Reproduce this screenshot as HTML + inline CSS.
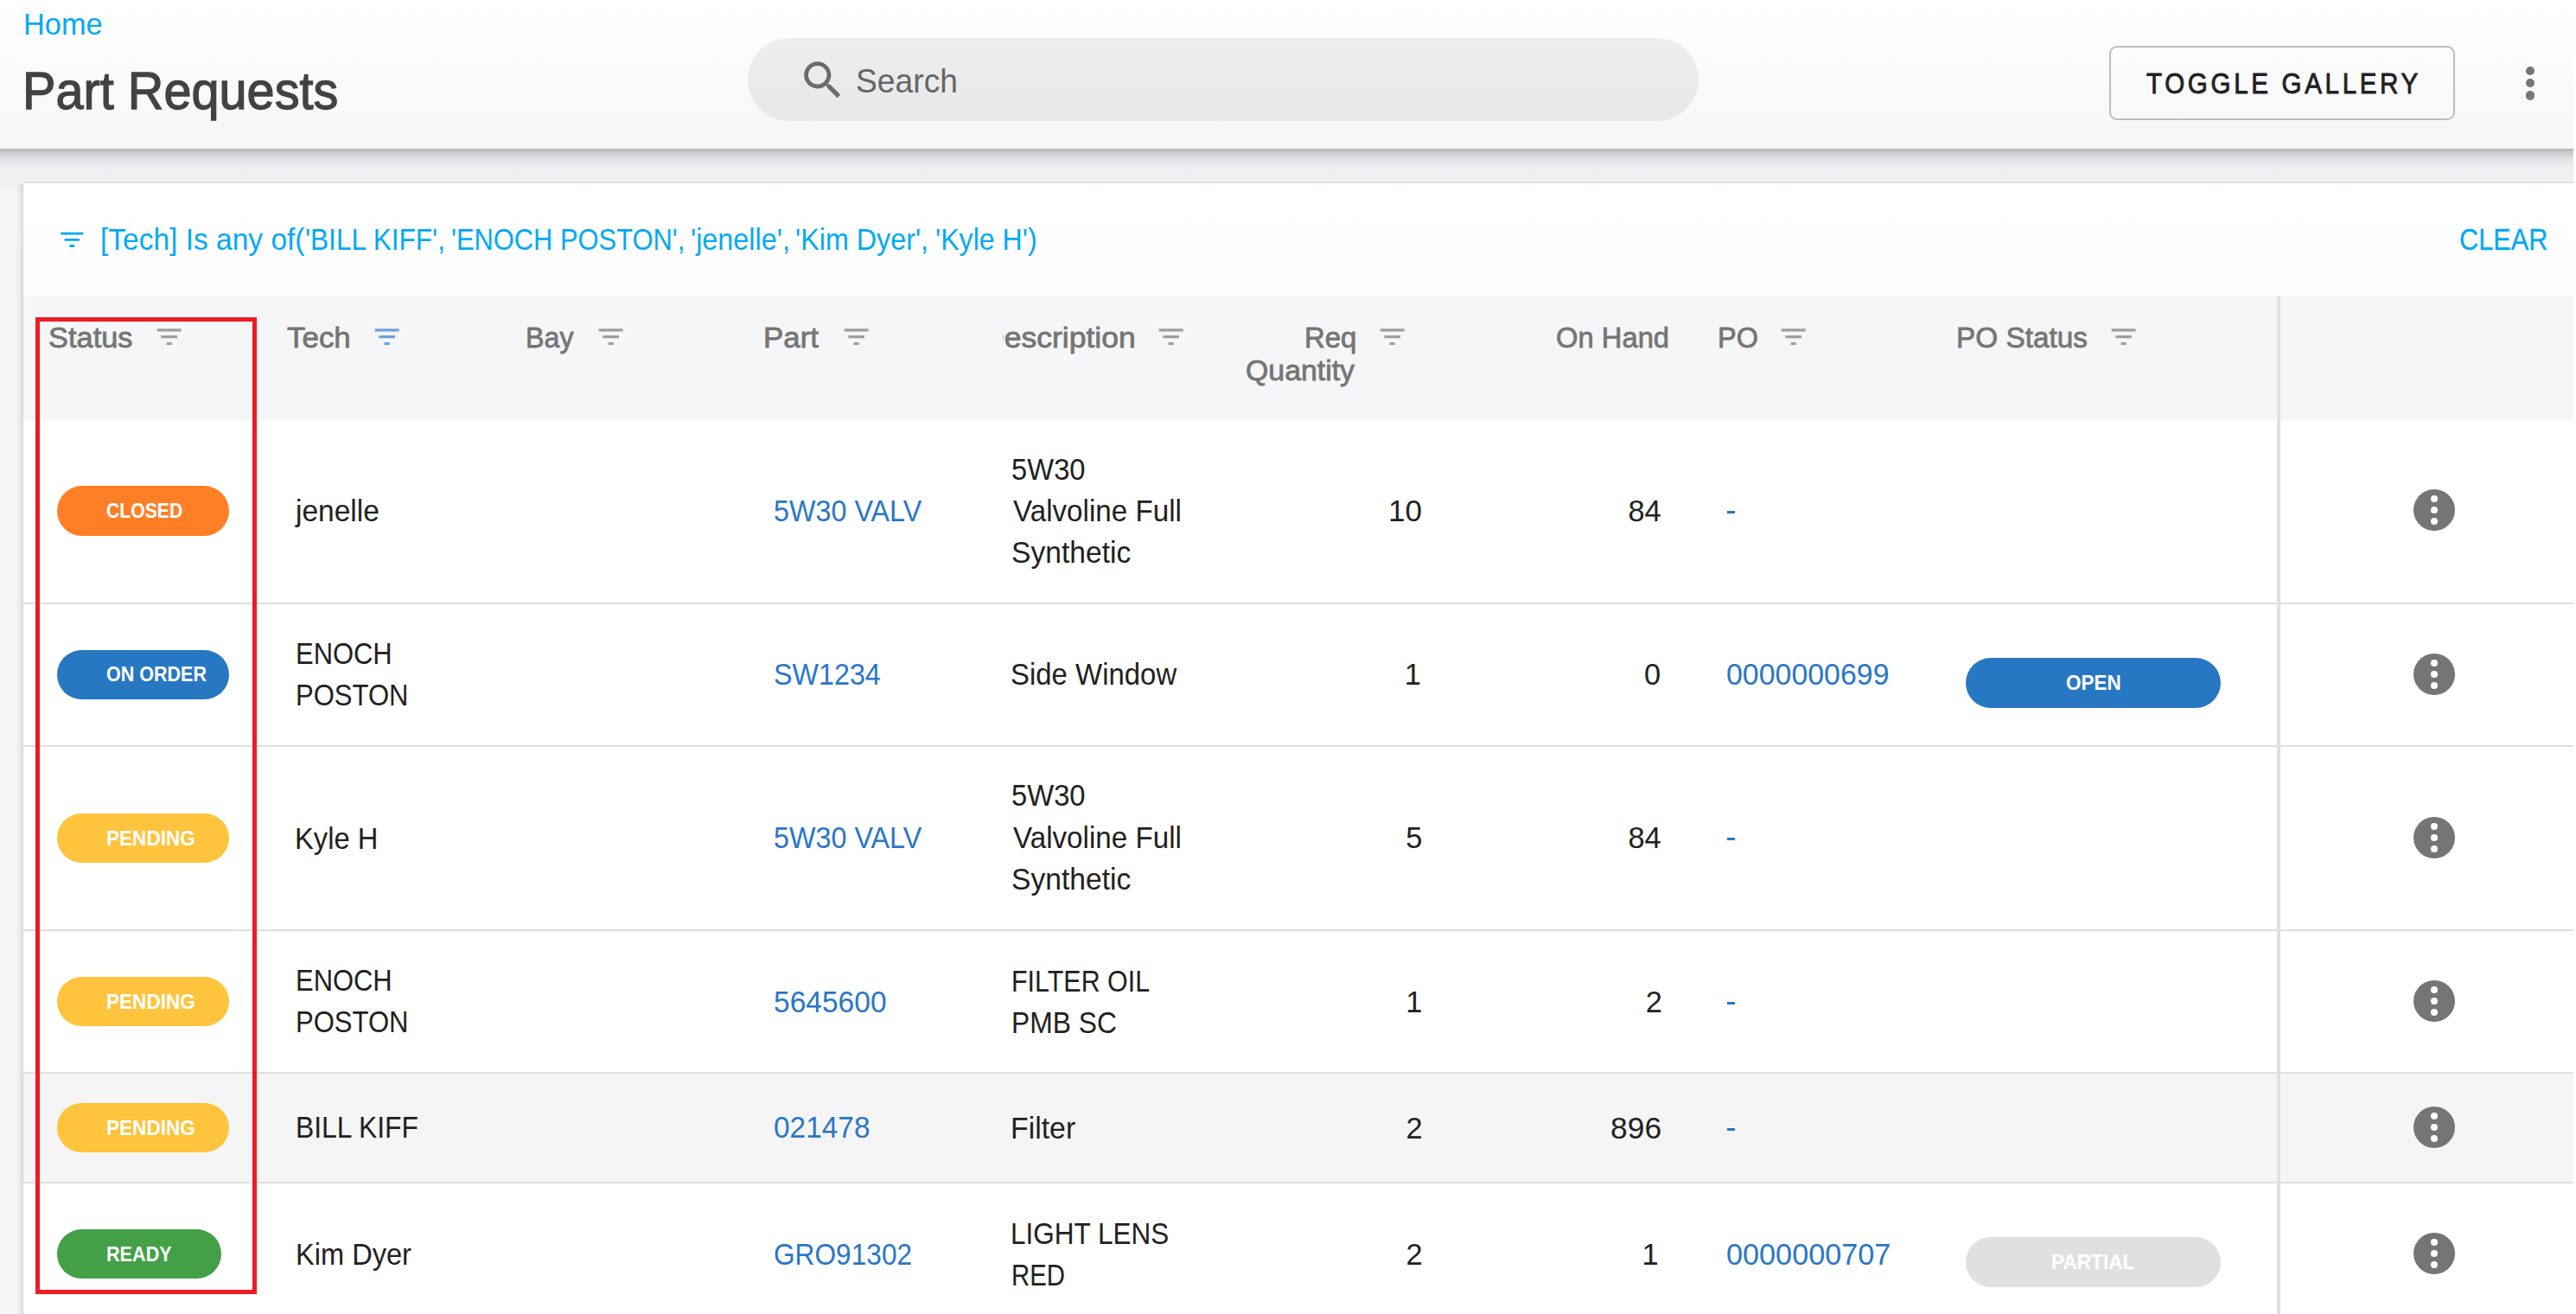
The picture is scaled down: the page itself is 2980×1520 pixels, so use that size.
<!DOCTYPE html>
<html><head><meta charset="utf-8"><title>Part Requests</title>
<style>
html,body{margin:0;padding:0;}
body{width:2980px;height:1520px;position:relative;overflow:hidden;background:#ffffff;font-family:"Liberation Sans",sans-serif;}
.page{position:absolute;left:0;top:0;width:2977px;height:1520px;background:#f5f6f8;overflow:hidden;}
.t{position:absolute;white-space:pre;transform-origin:0 0;}
.b{position:absolute;}
</style></head><body><div class="page">
<div class="b" style="left:0;top:0;width:2977px;height:172px;background:linear-gradient(#ffffff,#f5f6f8);"></div>
<div class="b" style="left:0;top:172px;width:2977px;height:50px;background:linear-gradient(#b3b4b7 0px,#c6c7ca 4px,#d9dadd 9px,#e6e7ea 15px,#eceef0 22px,#eff0f2 38px,#f4f5f7 50px);"></div>
<div class="t" style="left:26.87px;top:10.32px;font-size:35.18px;line-height:35.18px;color:#03a9f4;transform:scaleX(0.9765);">Home</div>
<div class="t" style="left:26.18px;top:75.10px;font-size:60.47px;line-height:60.47px;color:#424242;transform:scaleX(0.9534);-webkit-text-stroke:1.3px #424242;">Part Requests</div>
<div class="b" style="left:865px;top:44px;width:1100px;height:96px;border-radius:48px;background:linear-gradient(#ededee,#e8e8ea);"></div>
<svg class="b" style="left:922.9px;top:64.4px;width:57.6px;height:57.6px" viewBox="0 0 24 24"><path fill="#6b6b6b" d="M15.5 14h-.79l-.28-.27C15.41 12.59 16 11.11 16 9.5 16 5.91 13.09 3 9.5 3S3 5.91 3 9.5 5.91 16 9.5 16c1.61 0 3.09-.59 4.23-1.57l.27.28v.79l5 4.99L20.49 19l-4.99-5zm-6 0C7.01 14 5 11.99 5 9.5S7.01 5 9.5 5 14 7.01 14 9.5 11.99 14 9.5 14z"/></svg>
<div class="t" style="left:989.59px;top:73.67px;font-size:39.24px;line-height:39.24px;color:#666666;transform:scaleX(0.9496);">Search</div>
<div class="b" style="left:2439.5px;top:53.3px;width:400px;height:86px;box-sizing:border-box;border:2px solid #bdbdbd;border-radius:9px;"></div>
<div class="t" style="left:2483.15px;top:78.80px;font-size:34.01px;line-height:34.01px;color:#212121;transform:scaleX(0.8698);-webkit-text-stroke:0.9px #212121;letter-spacing:4.2px;">TOGGLE GALLERY</div>
<div class="b" style="left:2921.5px;top:76.5px;width:10.4px;height:10.4px;border-radius:50%;background:#757575;"></div>
<div class="b" style="left:2921.5px;top:91.0px;width:10.4px;height:10.4px;border-radius:50%;background:#757575;"></div>
<div class="b" style="left:2921.5px;top:105.4px;width:10.4px;height:10.4px;border-radius:50%;background:#757575;"></div>
<div class="b" style="left:17px;top:212px;width:10px;height:1308px;background:linear-gradient(90deg,rgba(0,0,0,0),rgba(0,0,0,0.03) 50%,rgba(0,0,0,0.13));"></div>
<div class="b" style="left:27px;top:210px;width:2950px;height:1310px;background:#ffffff;"></div>
<div class="b" style="left:27px;top:210px;width:2950px;height:2px;background:#dddddd;"></div>
<div class="b" style="left:27px;top:212px;width:2950px;height:130px;background:linear-gradient(#ffffff,#fdfdfe);"></div>
<svg class="b" style="left:65.70px;top:259.50px;width:34.66px;height:34.66px" viewBox="0 0 24 24"><path fill="#03a9f4" d="M10 18h4v-2h-4v2zM3 6v2h18V6H3zm3 7h12v-2H6v2z"/></svg>
<div class="t" style="left:116.32px;top:259.12px;font-size:35.18px;line-height:35.18px;color:#03a9f4;transform:scaleX(0.9526);">[Tech] Is any of(</div>
<div class="t" style="left:352.58px;top:259.12px;font-size:35.18px;line-height:35.18px;color:#03a9f4;transform:scaleX(0.8985);">'BILL KIFF',</div>
<div class="t" style="left:521.62px;top:259.12px;font-size:35.18px;line-height:35.18px;color:#03a9f4;transform:scaleX(0.8778);">'ENOCH POSTON',</div>
<div class="t" style="left:798.74px;top:259.12px;font-size:35.18px;line-height:35.18px;color:#03a9f4;transform:scaleX(0.9200);">'jenelle',</div>
<div class="t" style="left:920.35px;top:259.12px;font-size:35.18px;line-height:35.18px;color:#03a9f4;transform:scaleX(0.9181);">'Kim Dyer',</div>
<div class="t" style="left:1082.35px;top:259.12px;font-size:35.18px;line-height:35.18px;color:#03a9f4;transform:scaleX(0.9139);">'Kyle H')</div>
<div class="t" style="left:2844.57px;top:259.24px;font-size:35.03px;line-height:35.03px;color:#03a9f4;transform:scaleX(0.8762);-webkit-text-stroke:0.3px #03a9f4;">CLEAR</div>
<div class="b" style="left:27px;top:342px;width:2950px;height:144px;background:#f5f6f8;"></div>
<div class="t" style="left:55.92px;top:373.75px;font-size:33.72px;line-height:33.72px;color:#757575;transform:scaleX(1.0205);-webkit-text-stroke:0.8px #757575;">Status</div>
<svg class="b" style="left:177.20px;top:370.90px;width:37.34px;height:37.34px" viewBox="0 0 24 24"><path fill="#9e9e9e" d="M10 18h4v-2h-4v2zM3 6v2h18V6H3zm3 7h12v-2H6v2z"/></svg>
<div class="t" style="left:332.42px;top:373.75px;font-size:33.72px;line-height:33.72px;color:#757575;transform:scaleX(1.0359);-webkit-text-stroke:0.8px #757575;">Tech</div>
<svg class="b" style="left:429.43px;top:370.90px;width:37.34px;height:37.34px" viewBox="0 0 24 24"><path fill="#6ea2d9" d="M10 18h4v-2h-4v2zM3 6v2h18V6H3zm3 7h12v-2H6v2z"/></svg>
<div class="t" style="left:607.77px;top:373.75px;font-size:33.72px;line-height:33.72px;color:#757575;transform:scaleX(0.9557);-webkit-text-stroke:0.8px #757575;">Bay</div>
<svg class="b" style="left:688.03px;top:370.90px;width:37.34px;height:37.34px" viewBox="0 0 24 24"><path fill="#9e9e9e" d="M10 18h4v-2h-4v2zM3 6v2h18V6H3zm3 7h12v-2H6v2z"/></svg>
<div class="t" style="left:882.75px;top:373.75px;font-size:33.72px;line-height:33.72px;color:#757575;transform:scaleX(1.0357);-webkit-text-stroke:0.8px #757575;">Part</div>
<svg class="b" style="left:971.73px;top:370.90px;width:37.34px;height:37.34px" viewBox="0 0 24 24"><path fill="#9e9e9e" d="M10 18h4v-2h-4v2zM3 6v2h18V6H3zm3 7h12v-2H6v2z"/></svg>
<div class="t" style="left:1145.05px;top:373.75px;font-size:33.72px;line-height:33.72px;color:#757575;-webkit-text-stroke:0.8px #757575;transform:scaleX(1.0533);transform-origin:right;">Description</div>
<div class="b" style="left:1100px;top:360px;width:59.5px;height:60px;background:#f5f6f8;"></div>
<svg class="b" style="left:1335.83px;top:370.90px;width:37.34px;height:37.34px" viewBox="0 0 24 24"><path fill="#9e9e9e" d="M10 18h4v-2h-4v2zM3 6v2h18V6H3zm3 7h12v-2H6v2z"/></svg>
<div class="t" style="left:1508.62px;top:373.75px;font-size:33.72px;line-height:33.72px;color:#757575;transform:scaleX(0.9763);-webkit-text-stroke:0.8px #757575;">Req</div>
<div class="t" style="left:1440.99px;top:411.75px;font-size:33.72px;line-height:33.72px;color:#757575;transform:scaleX(1.0036);-webkit-text-stroke:0.8px #757575;">Quantity</div>
<svg class="b" style="left:1592.03px;top:370.90px;width:37.34px;height:37.34px" viewBox="0 0 24 24"><path fill="#9e9e9e" d="M10 18h4v-2h-4v2zM3 6v2h18V6H3zm3 7h12v-2H6v2z"/></svg>
<div class="t" style="left:1800.15px;top:373.75px;font-size:33.72px;line-height:33.72px;color:#757575;transform:scaleX(0.9710);-webkit-text-stroke:0.8px #757575;">On Hand</div>
<div class="t" style="left:1986.55px;top:373.75px;font-size:33.72px;line-height:33.72px;color:#757575;transform:scaleX(0.9628);-webkit-text-stroke:0.8px #757575;">PO</div>
<svg class="b" style="left:2056.33px;top:370.90px;width:37.34px;height:37.34px" viewBox="0 0 24 24"><path fill="#9e9e9e" d="M10 18h4v-2h-4v2zM3 6v2h18V6H3zm3 7h12v-2H6v2z"/></svg>
<div class="t" style="left:2262.88px;top:373.75px;font-size:33.72px;line-height:33.72px;color:#757575;transform:scaleX(0.9883);-webkit-text-stroke:0.8px #757575;">PO Status</div>
<svg class="b" style="left:2437.53px;top:370.90px;width:37.34px;height:37.34px" viewBox="0 0 24 24"><path fill="#9e9e9e" d="M10 18h4v-2h-4v2zM3 6v2h18V6H3zm3 7h12v-2H6v2z"/></svg>
<div class="b" style="left:27px;top:1242px;width:2950px;height:125px;background:#f5f5f5;"></div>
<div class="b" style="left:27px;top:697px;width:2950px;height:2px;background:#dfdfdf;"></div>
<div class="b" style="left:27px;top:862px;width:2950px;height:2px;background:#dfdfdf;"></div>
<div class="b" style="left:27px;top:1075px;width:2950px;height:2px;background:#dfdfdf;"></div>
<div class="b" style="left:27px;top:1240px;width:2950px;height:2px;background:#dfdfdf;"></div>
<div class="b" style="left:27px;top:1367px;width:2950px;height:2px;background:#dfdfdf;"></div>
<div class="b" style="left:2633.5px;top:342px;width:4px;height:1178px;background:#e0e0e0;"></div>
<div class="b" style="left:66px;top:562px;width:199px;height:58px;border-radius:29.0px;background:#ff7f27;"></div>
<div class="t" style="left:123.22px;top:578.77px;font-size:24.13px;line-height:24.13px;color:#ffffff;font-weight:700;transform:scaleX(0.8779);">CLOSED</div>
<div class="t" style="left:341.73px;top:573.53px;font-size:34.45px;line-height:34.45px;color:#212121;transform:scaleX(0.9722);">jenelle</div>
<div class="t" style="left:895.19px;top:573.73px;font-size:34.45px;line-height:34.45px;color:#2a76c6;transform:scaleX(0.9384);">5W30 VALV</div>
<div class="t" style="left:1170.37px;top:525.73px;font-size:34.45px;line-height:34.45px;color:#212121;transform:scaleX(0.9513);">5W30</div>
<div class="t" style="left:1171.56px;top:573.73px;font-size:34.45px;line-height:34.45px;color:#212121;transform:scaleX(0.9637);">Valvoline Full</div>
<div class="t" style="left:1170.19px;top:621.73px;font-size:34.45px;line-height:34.45px;color:#212121;transform:scaleX(0.9767);">Synthetic</div>
<div class="t" style="left:1606.35px;top:573.53px;font-size:34.45px;line-height:34.45px;color:#212121;transform:scaleX(1.0189);">10</div>
<div class="t" style="left:1883.40px;top:573.53px;font-size:34.45px;line-height:34.45px;color:#212121;">84</div>
<div class="b" style="left:1998px;top:590.5px;width:9px;height:3px;background:#2a76c6;"></div>
<div class="b" style="left:66px;top:752px;width:199px;height:57px;border-radius:28.5px;background:#2877c3;"></div>
<div class="t" style="left:123.11px;top:768.17px;font-size:24.13px;line-height:24.13px;color:#ffffff;font-weight:700;transform:scaleX(0.8916);">ON ORDER</div>
<div class="t" style="left:341.99px;top:738.53px;font-size:34.45px;line-height:34.45px;color:#212121;transform:scaleX(0.8981);">ENOCH</div>
<div class="t" style="left:341.98px;top:786.63px;font-size:34.45px;line-height:34.45px;color:#212121;transform:scaleX(0.9016);">POSTON</div>
<div class="t" style="left:895.05px;top:763.23px;font-size:34.45px;line-height:34.45px;color:#2a76c6;transform:scaleX(0.9371);">SW1234</div>
<div class="t" style="left:1169.02px;top:762.53px;font-size:34.45px;line-height:34.45px;color:#212121;transform:scaleX(0.9562);">Side Window</div>
<div class="t" style="left:1624.80px;top:762.83px;font-size:34.45px;line-height:34.45px;color:#212121;">1</div>
<div class="t" style="left:1902.00px;top:762.83px;font-size:34.45px;line-height:34.45px;color:#212121;">0</div>
<div class="t" style="left:1997.47px;top:762.83px;font-size:34.45px;line-height:34.45px;color:#2a76c6;transform:scaleX(0.9844);">0000000699</div>
<div class="b" style="left:2274px;top:761px;width:295px;height:58px;border-radius:29.0px;background:#2877c3;"></div>
<div class="t" style="left:2389.77px;top:778.17px;font-size:24.13px;line-height:24.13px;color:#ffffff;font-weight:700;transform:scaleX(0.9316);">OPEN</div>
<div class="b" style="left:66px;top:941px;width:199px;height:57px;border-radius:28.5px;background:#fec43d;"></div>
<div class="t" style="left:122.60px;top:958.17px;font-size:24.13px;line-height:24.13px;color:#ffffff;font-weight:700;transform:scaleX(0.9350);">PENDING</div>
<div class="t" style="left:341.14px;top:953.23px;font-size:34.45px;line-height:34.45px;color:#212121;transform:scaleX(0.9494);">Kyle H</div>
<div class="t" style="left:895.19px;top:951.83px;font-size:34.45px;line-height:34.45px;color:#2a76c6;transform:scaleX(0.9384);">5W30 VALV</div>
<div class="t" style="left:1170.37px;top:903.43px;font-size:34.45px;line-height:34.45px;color:#212121;transform:scaleX(0.9513);">5W30</div>
<div class="t" style="left:1171.56px;top:951.83px;font-size:34.45px;line-height:34.45px;color:#212121;transform:scaleX(0.9637);">Valvoline Full</div>
<div class="t" style="left:1170.19px;top:999.83px;font-size:34.45px;line-height:34.45px;color:#212121;transform:scaleX(0.9767);">Synthetic</div>
<div class="t" style="left:1626.30px;top:951.83px;font-size:34.45px;line-height:34.45px;color:#212121;">5</div>
<div class="t" style="left:1883.40px;top:951.83px;font-size:34.45px;line-height:34.45px;color:#212121;">84</div>
<div class="b" style="left:1998px;top:969px;width:9px;height:3px;background:#2a76c6;"></div>
<div class="b" style="left:66px;top:1130px;width:199px;height:57px;border-radius:28.5px;background:#fec43d;"></div>
<div class="t" style="left:122.60px;top:1147.17px;font-size:24.13px;line-height:24.13px;color:#ffffff;font-weight:700;transform:scaleX(0.9350);">PENDING</div>
<div class="t" style="left:341.99px;top:1117.03px;font-size:34.45px;line-height:34.45px;color:#212121;transform:scaleX(0.8981);">ENOCH</div>
<div class="t" style="left:341.98px;top:1165.13px;font-size:34.45px;line-height:34.45px;color:#212121;transform:scaleX(0.9016);">POSTON</div>
<div class="t" style="left:895.04px;top:1141.53px;font-size:34.45px;line-height:34.45px;color:#2a76c6;transform:scaleX(0.9737);">5645600</div>
<div class="t" style="left:1169.72px;top:1118.43px;font-size:34.45px;line-height:34.45px;color:#212121;transform:scaleX(0.8841);">FILTER OIL</div>
<div class="t" style="left:1169.61px;top:1165.83px;font-size:34.45px;line-height:34.45px;color:#212121;transform:scaleX(0.9238);">PMB SC</div>
<div class="t" style="left:1626.30px;top:1141.83px;font-size:34.45px;line-height:34.45px;color:#212121;">1</div>
<div class="t" style="left:1903.75px;top:1141.83px;font-size:34.45px;line-height:34.45px;color:#212121;">2</div>
<div class="b" style="left:1998px;top:1159px;width:9px;height:3px;background:#2a76c6;"></div>
<div class="b" style="left:66px;top:1276px;width:199px;height:57px;border-radius:28.5px;background:#fec43d;"></div>
<div class="t" style="left:122.60px;top:1293.17px;font-size:24.13px;line-height:24.13px;color:#ffffff;font-weight:700;transform:scaleX(0.9350);">PENDING</div>
<div class="t" style="left:341.92px;top:1287.43px;font-size:34.45px;line-height:34.45px;color:#212121;transform:scaleX(0.9225);">BILL KIFF</div>
<div class="t" style="left:895.19px;top:1287.43px;font-size:34.45px;line-height:34.45px;color:#2a76c6;transform:scaleX(0.9706);">021478</div>
<div class="t" style="left:1169.25px;top:1288.33px;font-size:34.45px;line-height:34.45px;color:#212121;transform:scaleX(0.9822);">Filter</div>
<div class="t" style="left:1626.55px;top:1287.83px;font-size:34.45px;line-height:34.45px;color:#212121;">2</div>
<div class="t" style="left:1863.46px;top:1287.83px;font-size:34.45px;line-height:34.45px;color:#212121;transform:scaleX(1.0285);">896</div>
<div class="b" style="left:1998px;top:1305px;width:9px;height:3px;background:#2a76c6;"></div>
<div class="b" style="left:66px;top:1422px;width:190px;height:57px;border-radius:28.5px;background:#43a047;"></div>
<div class="t" style="left:122.67px;top:1439.07px;font-size:24.13px;line-height:24.13px;color:#ffffff;font-weight:700;transform:scaleX(0.8964);">READY</div>
<div class="t" style="left:341.75px;top:1433.73px;font-size:34.45px;line-height:34.45px;color:#212121;transform:scaleX(0.9461);">Kim Dyer</div>
<div class="t" style="left:894.89px;top:1433.73px;font-size:34.45px;line-height:34.45px;color:#2a76c6;transform:scaleX(0.9192);">GRO91302</div>
<div class="t" style="left:1169.44px;top:1410.43px;font-size:34.45px;line-height:34.45px;color:#212121;transform:scaleX(0.9148);">LIGHT LENS</div>
<div class="t" style="left:1169.61px;top:1458.13px;font-size:34.45px;line-height:34.45px;color:#212121;transform:scaleX(0.8536);">RED</div>
<div class="t" style="left:1626.55px;top:1433.83px;font-size:34.45px;line-height:34.45px;color:#212121;">2</div>
<div class="t" style="left:1899.50px;top:1433.83px;font-size:34.45px;line-height:34.45px;color:#212121;">1</div>
<div class="t" style="left:1996.66px;top:1433.83px;font-size:34.45px;line-height:34.45px;color:#2a76c6;transform:scaleX(0.9939);">0000000707</div>
<div class="b" style="left:2274px;top:1431px;width:295px;height:58px;border-radius:29.0px;background:#e0e0e0;"></div>
<div class="t" style="left:2373.10px;top:1448.27px;font-size:24.13px;line-height:24.13px;color:#ffffff;font-weight:700;transform:scaleX(0.9373);">PARTIAL</div>
<div class="b" style="left:2792.2px;top:566px;width:48px;height:48px;border-radius:50%;background:#757575;"></div>
<div class="b" style="left:2812.2px;top:572.7px;width:8px;height:8px;border-radius:50%;background:#ffffff;"></div>
<div class="b" style="left:2812.2px;top:586px;width:8px;height:8px;border-radius:50%;background:#ffffff;"></div>
<div class="b" style="left:2812.2px;top:599.3px;width:8px;height:8px;border-radius:50%;background:#ffffff;"></div>
<div class="b" style="left:2792.2px;top:756.0px;width:48px;height:48px;border-radius:50%;background:#757575;"></div>
<div class="b" style="left:2812.2px;top:762.7px;width:8px;height:8px;border-radius:50%;background:#ffffff;"></div>
<div class="b" style="left:2812.2px;top:776.0px;width:8px;height:8px;border-radius:50%;background:#ffffff;"></div>
<div class="b" style="left:2812.2px;top:789.3px;width:8px;height:8px;border-radius:50%;background:#ffffff;"></div>
<div class="b" style="left:2792.2px;top:945.0px;width:48px;height:48px;border-radius:50%;background:#757575;"></div>
<div class="b" style="left:2812.2px;top:951.7px;width:8px;height:8px;border-radius:50%;background:#ffffff;"></div>
<div class="b" style="left:2812.2px;top:965.0px;width:8px;height:8px;border-radius:50%;background:#ffffff;"></div>
<div class="b" style="left:2812.2px;top:978.3px;width:8px;height:8px;border-radius:50%;background:#ffffff;"></div>
<div class="b" style="left:2792.2px;top:1134.0px;width:48px;height:48px;border-radius:50%;background:#757575;"></div>
<div class="b" style="left:2812.2px;top:1140.7px;width:8px;height:8px;border-radius:50%;background:#ffffff;"></div>
<div class="b" style="left:2812.2px;top:1154.0px;width:8px;height:8px;border-radius:50%;background:#ffffff;"></div>
<div class="b" style="left:2812.2px;top:1167.3px;width:8px;height:8px;border-radius:50%;background:#ffffff;"></div>
<div class="b" style="left:2792.2px;top:1280.0px;width:48px;height:48px;border-radius:50%;background:#757575;"></div>
<div class="b" style="left:2812.2px;top:1286.7px;width:8px;height:8px;border-radius:50%;background:#ffffff;"></div>
<div class="b" style="left:2812.2px;top:1300.0px;width:8px;height:8px;border-radius:50%;background:#ffffff;"></div>
<div class="b" style="left:2812.2px;top:1313.3px;width:8px;height:8px;border-radius:50%;background:#ffffff;"></div>
<div class="b" style="left:2792.2px;top:1426.0px;width:48px;height:48px;border-radius:50%;background:#757575;"></div>
<div class="b" style="left:2812.2px;top:1432.7px;width:8px;height:8px;border-radius:50%;background:#ffffff;"></div>
<div class="b" style="left:2812.2px;top:1446.0px;width:8px;height:8px;border-radius:50%;background:#ffffff;"></div>
<div class="b" style="left:2812.2px;top:1459.3px;width:8px;height:8px;border-radius:50%;background:#ffffff;"></div>
<div class="b" style="left:41px;top:367px;width:256px;height:1130px;box-sizing:border-box;border:5px solid #ed1c24;"></div>
</div></body></html>
